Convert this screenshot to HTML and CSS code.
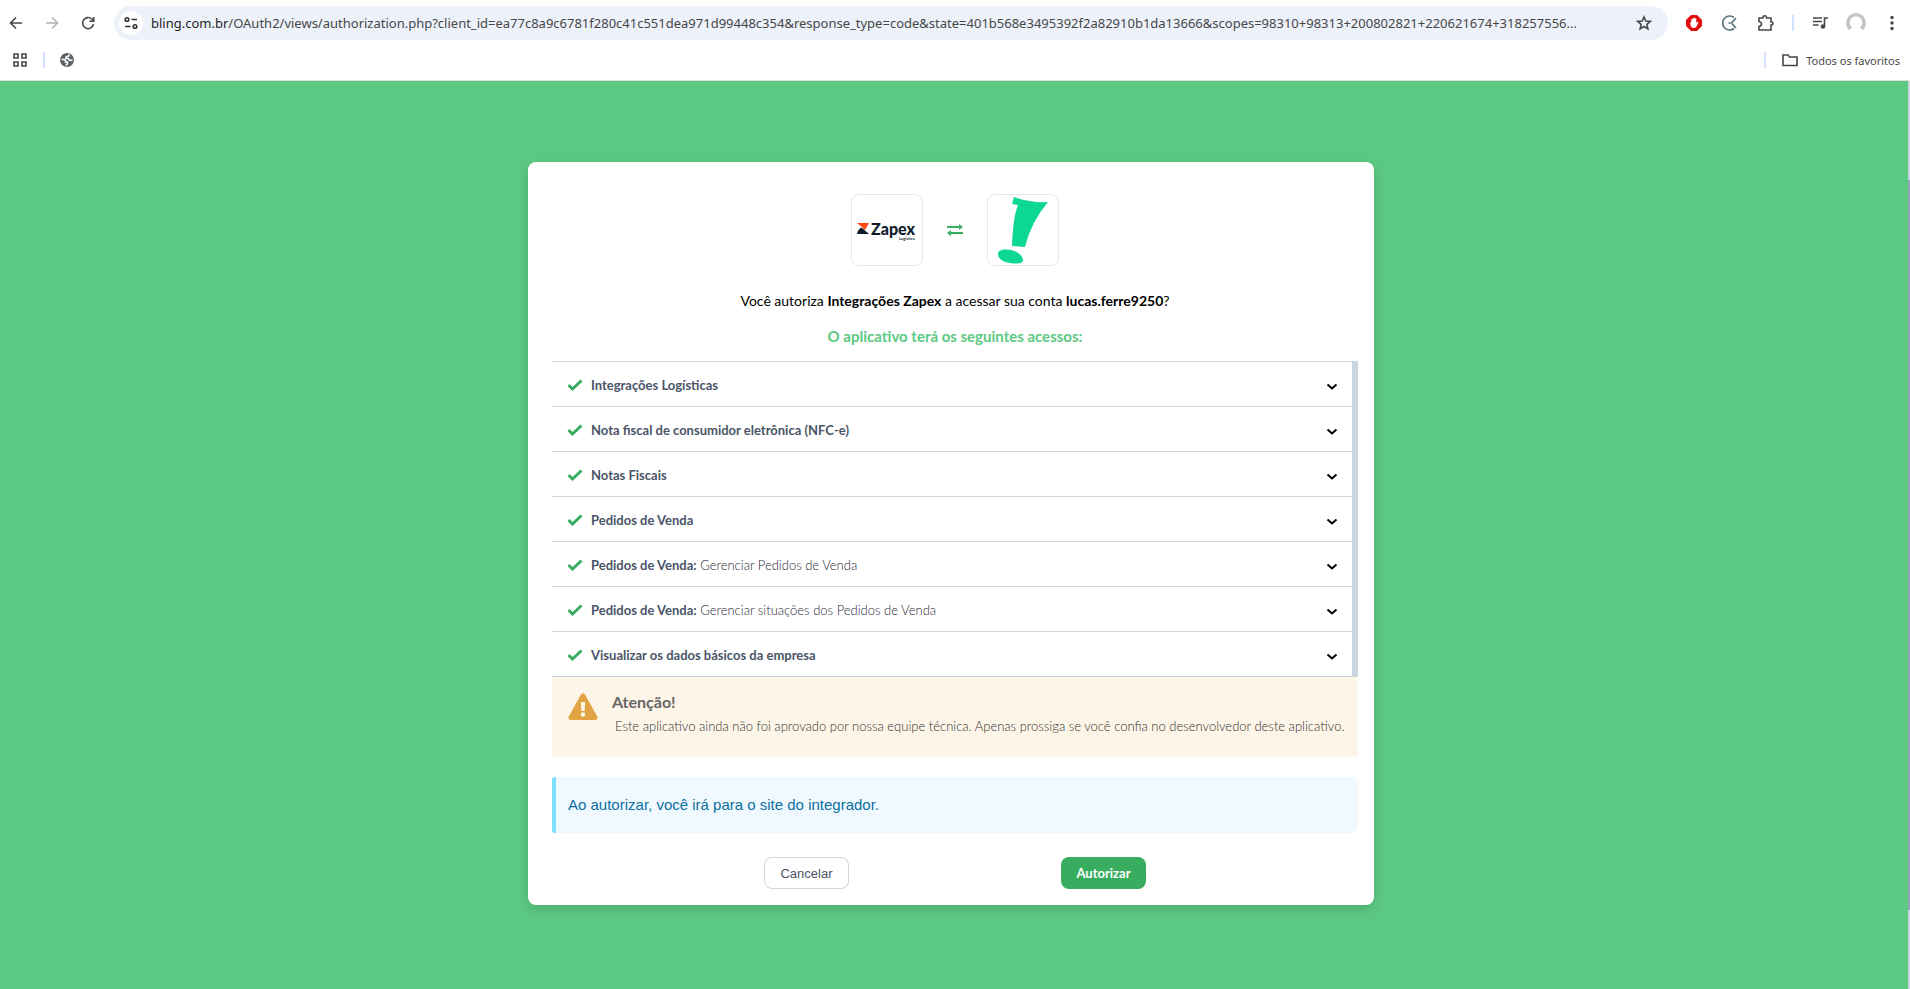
FILE: index.html
```
<!DOCTYPE html>
<html lang="pt-BR">
<head>
    <meta charset="utf-8">
    <title>Autorizar aplicativo</title>
    <link rel="stylesheet" href="styles.css">
</head>
<body>
    <header class="browser">
        <div class="toolbar">
            <div class="nav-buttons">
                <button class="icon-btn" aria-label="Voltar">
                    <svg width="14" height="14" viewBox="0 0 14 14"><path d="M13 7H2M7 1.5L1.5 7L7 12.5" /></svg>
                </button>
                <button class="icon-btn faded" aria-label="Avançar">
                    <svg width="14" height="14" viewBox="0 0 14 14"><path d="M1 7H12M7 1.5L12.5 7L7 12.5" /></svg>
                </button>
                <button class="icon-btn" aria-label="Recarregar">
                    <svg width="14" height="14" viewBox="0 0 14 14"><path d="M12.5 8A5.5 5.5 0 1 1 10.8 3L12.5 4.8M12.7 1V5.3H8.4" /></svg>
                </button>
            </div>
            <div class="address">
                <button class="site-info" aria-label="Informações do site">
                    <svg width="14" height="14" viewBox="0 0 14 14"><path d="M7.5 3.5H13M1 10.5H6.5" /><circle cx="3" cy="3.5" r="1.8" /><circle cx="11" cy="10.5" r="1.8" /></svg>
                </button>
                <span class="url"><span class="host">bling.com.br</span>/OAuth2/views/authorization.php?client_id=ea77c8a9c6781f280c41c551dea971d99448c354&amp;response_type=code&amp;state=401b568e3495392f2a82910b1da13666&amp;scopes=98310+98313+200802821+220621674+318257556...</span>
                <button class="icon-btn" aria-label="Favoritar">
                    <svg width="16" height="16" viewBox="0 0 16 16"><path d="M8 2L9.8 6.1L14.2 6.5L10.9 9.4L11.9 13.8L8 11.5L4.1 13.8L5.1 9.4L1.8 6.5L6.2 6.1Z" /></svg>
                </button>
            </div>
            <div class="extensions">
                <button class="icon-btn" aria-label="Bloqueador">
                    <svg width="16" height="16" viewBox="0 0 16 16"><path class="block-bg" d="M5 0H11L16 5V11L11 16H5L0 11V5Z" /><path class="block-hand" d="M4.2 7.5L5.2 7V4.2H6.5V3.2H7.8V2.8H9V3.5H10.3V8L11.6 6.8L12.4 7.6L10.8 11Q10 13 8 13Q5 13 4.5 10Z" /></svg>
                </button>
                <button class="icon-btn slate" aria-label="Extensão">
                    <svg width="16" height="16" viewBox="0 0 16 16"><path d="M12 2.5A7 7 0 1 0 12 13.5M14 3L9.5 8L14 13" /><circle class="dot" cx="7.5" cy="8" r="1" /></svg>
                </button>
                <button class="icon-btn" aria-label="Extensões">
                    <svg width="18" height="18" viewBox="0 0 18 18"><path d="M2 4H6V3.5A1.5 1.5 0 0 1 9.5 3.5V4H14V8H14.5A1.5 1.5 0 0 1 14.5 11H14V16H2V12.5Q4.5 12 4.5 10Q4.5 8 2 7.5Z" /></svg>
                </button>
                <span class="divider"></span>
                <button class="icon-btn" aria-label="Mídia">
                    <svg width="16" height="16" viewBox="0 0 16 16"><path d="M1 3H10M1 6.5H10M1 10H6.5M12.5 11V3H16" /><circle class="dot" cx="11" cy="11.5" r="2.3" /></svg>
                </button>
                <button class="icon-btn" aria-label="Perfil">
                    <svg width="20" height="20" viewBox="0 0 20 20"><circle class="avatar-bg" cx="10" cy="10" r="10" /><path class="avatar-fg" d="M10 3.5A6 6 0 0 1 13.5 14.5Q16.5 15.5 17 18V20H3V18Q3.5 15.5 6.5 14.5A6 6 0 0 1 10 3.5Z" /></svg>
                </button>
                <button class="icon-btn" aria-label="Menu">
                    <svg width="16" height="16" viewBox="0 0 16 16"><circle class="dot" cx="8" cy="2.5" r="1.7" /><circle class="dot" cx="8" cy="8" r="1.7" /><circle class="dot" cx="8" cy="13.5" r="1.7" /></svg>
                </button>
            </div>
        </div>
        <div class="bookmarks">
            <button class="icon-btn" aria-label="Aplicativos">
                <svg width="16" height="16" viewBox="0 0 16 16"><path d="M2 2H6V6H2ZM10 2H14V6H10ZM2 10H6V14H2ZM10 10H14V14H10Z" /></svg>
            </button>
            <span class="divider"></span>
            <button class="icon-btn" aria-label="Favorito">
                <svg width="14" height="14" viewBox="0 0 14 14"><circle class="globe" cx="7" cy="7" r="7" /><path class="land" d="M9 1.5Q9 3.5 7 3.5Q5.5 4 6 5.5H8.5Q9 7.5 11 7.5L12.5 7M1.5 6.5H4Q6 7 5.5 9H7.5V10.5L6 12.5" /></svg>
            </button>
            <div class="all-bookmarks">
                <span class="divider"></span>
                <button class="folder-btn">
                    <svg width="16" height="14" viewBox="0 0 16 14"><path d="M1 2H6L7.5 4H15V12.5H1Z" /></svg>
                    Todos os favoritos
                </button>
            </div>
        </div>
    </header>

    <div class="viewport">
        <main class="page">
            <section class="card">
                <div class="logos">
                    <div class="logo-box">
                        <svg width="64" height="24" viewBox="0 0 64 24" role="img" aria-label="Zapex Logística">
                            <path class="zapex-top" d="M2 5H14L10 12L7 9Z" />
                            <path class="zapex-bottom" d="M2 16Q3 11 6.5 9.5L14 16Z" />
                            <text class="zapex-name" x="16" y="17">Zapex</text>
                            <text class="zapex-sub" x="44" y="22">Logística</text>
                        </svg>
                    </div>
                    <svg class="swap" width="16" height="12" viewBox="0 0 16 12"><path class="swap-line" d="M0 3H13M16 9H3" /><path class="swap-head" d="M12 0L16 3L12 6ZM4 6L0 9L4 12Z" /></svg>
                    <div class="logo-box">
                        <svg width="70" height="70" viewBox="0 0 70 70" role="img" aria-label="Bling"><path class="bling" d="M26 2Q43 8 60 7Q43 27 37 52L24 51Q25 22 30 10L24 9ZM17 54.5C27 54 35 60 35 65C35 69 28 69 22 68C14 67 10 63 10 59C10 56 13 54.5 17 54.5Z" /></svg>
                    </div>
                </div>

                <p class="question">Você autoriza <strong>Integrações Zapex</strong> a acessar sua conta <strong>lucas.ferre9250</strong>?</p>
                <h1 class="subtitle">O aplicativo terá os seguintes acessos:</h1>

                <ul class="scopes">
                    <li><button class="scope"><svg class="check" width="16" height="12" viewBox="0 0 16 12"><path d="M1.5 6L5.5 10L14.5 1.5" /></svg><strong>Integrações Logísticas</strong><svg class="chevron" width="12" height="8" viewBox="0 0 12 8"><path d="M1.5 1.5L6 5.5L10.5 1.5" /></svg></button></li>
                    <li><button class="scope"><svg class="check" width="16" height="12" viewBox="0 0 16 12"><path d="M1.5 6L5.5 10L14.5 1.5" /></svg><strong>Nota fiscal de consumidor eletrônica (NFC-e)</strong><svg class="chevron" width="12" height="8" viewBox="0 0 12 8"><path d="M1.5 1.5L6 5.5L10.5 1.5" /></svg></button></li>
                    <li><button class="scope"><svg class="check" width="16" height="12" viewBox="0 0 16 12"><path d="M1.5 6L5.5 10L14.5 1.5" /></svg><strong>Notas Fiscais</strong><svg class="chevron" width="12" height="8" viewBox="0 0 12 8"><path d="M1.5 1.5L6 5.5L10.5 1.5" /></svg></button></li>
                    <li><button class="scope"><svg class="check" width="16" height="12" viewBox="0 0 16 12"><path d="M1.5 6L5.5 10L14.5 1.5" /></svg><strong>Pedidos de Venda</strong><svg class="chevron" width="12" height="8" viewBox="0 0 12 8"><path d="M1.5 1.5L6 5.5L10.5 1.5" /></svg></button></li>
                    <li><button class="scope"><svg class="check" width="16" height="12" viewBox="0 0 16 12"><path d="M1.5 6L5.5 10L14.5 1.5" /></svg><span><strong>Pedidos de Venda:</strong> Gerenciar Pedidos de Venda</span><svg class="chevron" width="12" height="8" viewBox="0 0 12 8"><path d="M1.5 1.5L6 5.5L10.5 1.5" /></svg></button></li>
                    <li><button class="scope"><svg class="check" width="16" height="12" viewBox="0 0 16 12"><path d="M1.5 6L5.5 10L14.5 1.5" /></svg><span><strong>Pedidos de Venda:</strong> Gerenciar situações dos Pedidos de Venda</span><svg class="chevron" width="12" height="8" viewBox="0 0 12 8"><path d="M1.5 1.5L6 5.5L10.5 1.5" /></svg></button></li>
                    <li><button class="scope"><svg class="check" width="16" height="12" viewBox="0 0 16 12"><path d="M1.5 6L5.5 10L14.5 1.5" /></svg><strong>Visualizar os dados básicos da empresa</strong><svg class="chevron" width="12" height="8" viewBox="0 0 12 8"><path d="M1.5 1.5L6 5.5L10.5 1.5" /></svg></button></li>
                </ul>

                <div class="warning">
                    <svg width="30" height="28" viewBox="0 0 30 28"><path class="triangle" d="M13 1.5Q15 -1 17 1.5L29.5 24Q30 27 27 27H3Q0 27 0.5 24Z" /><path class="mark" d="M12.8 9H17.2L16.7 18H13.3Z" /><circle class="mark" cx="15" cy="21.5" r="2.3" /></svg>
                    <div class="warning-text">
                        <h2>Atenção!</h2>
                        <p>Este aplicativo ainda não foi aprovado por nossa equipe técnica. Apenas prossiga se você confia no desenvolvedor deste aplicativo.</p>
                    </div>
                </div>

                <p class="info">Ao autorizar, você irá para o site do integrador.</p>

                <div class="actions">
                    <button class="btn btn-cancel">Cancelar</button>
                    <button class="btn btn-authorize">Autorizar</button>
                </div>
            </section>
        </main>
        <div class="scroll-track"><div class="scroll-thumb"></div></div>
    </div>
</body>
</html>
```
FILE: styles.css
```
* {
    box-sizing: border-box;
}
body {
    margin: 0;
    min-height: 100vh;
    display: flex;
    flex-direction: column;
    font-family: Lato, "Open Sans", sans-serif;
    background: #5cc983;
}
button {
    font-family: inherit;
    border: none;
    background: none;
    padding: 0;
    cursor: pointer;
}
h1, h2, p, ul {
    margin: 0;
    padding: 0;
}

/* browser bar */
.browser {
    height: 81px;
    padding: 6px 8px 0 8px;
    background: white;
    border-bottom: 1px solid #dadce0;
    font-family: "Noto Sans", "Open Sans", sans-serif;
    color: #474747;
}
.toolbar {
    display: flex;
    align-items: center;
    height: 34px;
}
.nav-buttons {
    display: flex;
    gap: 20px;
    width: 106px;
}
.icon-btn {
    display: flex;
    align-items: center;
    justify-content: center;
    color: #474747;
}
.icon-btn svg, .site-info svg, .folder-btn svg {
    fill: none;
    stroke: currentColor;
    stroke-width: 1.6;
}
.nav-buttons .icon-btn {
    width: 16px;
}
.extensions .icon-btn {
    width: 20px;
}
.icon-btn.faded {
    color: #b4b4b4;
}
.icon-btn.slate {
    color: #546e7a;
}
.icon-btn .dot {
    fill: currentColor;
    stroke: none;
}
.icon-btn .globe {
    fill: #5f6368;
    stroke: none;
}
.icon-btn .land {
    stroke: white;
}
.icon-btn .block-bg {
    fill: #e30b0b;
    stroke: none;
}
.icon-btn .block-hand {
    fill: white;
    stroke: none;
}
.icon-btn .avatar-bg {
    fill: #c4c4c4;
    stroke: none;
}
.icon-btn .avatar-fg {
    fill: white;
    stroke: none;
}
.address {
    flex: 1;
    min-width: 0;
    display: flex;
    align-items: center;
    height: 34px;
    padding: 0 16px 0 5px;
    border-radius: 17px;
    background: #edf1fa;
}
.site-info {
    display: flex;
    align-items: center;
    justify-content: center;
    width: 24px;
    height: 24px;
    border-radius: 12px;
    background: white;
    color: #303030;
}
.url {
    flex: 1;
    min-width: 0;
    overflow: hidden;
    white-space: nowrap;
    margin: 0 16px 0 8px;
    font-size: 13px;
}
.host {
    color: #1f1f1f;
}
.extensions {
    display: flex;
    align-items: center;
    gap: 16px;
    padding-left: 16px;
}
.divider {
    width: 2px;
    height: 16px;
    background: #d3e3fd;
}
.bookmarks {
    display: flex;
    align-items: center;
    gap: 15px;
    height: 40px;
    padding: 0 2px 0 4px;
}
.all-bookmarks {
    display: flex;
    align-items: center;
    gap: 16px;
    margin-left: auto;
}
.folder-btn {
    display: flex;
    align-items: center;
    gap: 8px;
    font-size: 11px;
    color: #474747;
}

/* page */
.viewport {
    flex: 1;
    display: flex;
}
.page {
    flex: 1;
    padding: 81px 6px 79px 0;
}
.scroll-track {
    width: 2px;
    padding: 99px 0 79px;
    background: #cbd5e0;
    display: flex;
}
.scroll-thumb {
    flex: 1;
    background: #94a3b8;
}
.card {
    max-width: 846px;
    margin: 0 auto;
    padding: 32px 16px 16px 24px;
    border-radius: 8px;
    background: white;
    box-shadow: 0 4px 12px rgba(0,0,0,0.15);
}
.logos {
    display: flex;
    align-items: center;
    justify-content: center;
    gap: 24px;
}
.logo-box {
    display: flex;
    align-items: center;
    justify-content: center;
    width: 72px;
    height: 72px;
    border: 1px solid #e2e8f0;
    border-radius: 8px;
}
.zapex-top {
    fill: #ff4713;
}
.zapex-bottom, .zapex-name, .zapex-sub {
    fill: #101c2b;
}
.zapex-name {
    font: 900 16px Lato, sans-serif;
}
.zapex-sub {
    font: bold 4px Lato, sans-serif;
}
.swap-line {
    stroke: #38ad60;
    stroke-width: 2;
}
.swap-head {
    fill: #38ad60;
}
.bling {
    fill: #0cd894;
}
.question {
    margin-top: 25px;
    font-size: 14px;
    line-height: 20px;
    text-align: center;
    color: #000;
}
.subtitle {
    margin: 15px 0 15px;
    font-size: 15px;
    line-height: 20px;
    text-align: center;
    color: #5cc983;
}
.scopes {
    list-style: none;
    border-top: 1px solid #cbd5e0;
    border-right: 6px solid #cbd5e0;
}
.scope {
    display: flex;
    align-items: center;
    gap: 8px;
    width: 100%;
    height: 45px;
    padding: 2px 14px 0 15px;
    border-bottom: 1px solid #cbd5e0;
    font-size: 13px;
    font-weight: 300;
    color: #1f2937;
}
.scope strong {
    font-weight: bold;
    color: #4a5568;
}
.check {
    fill: none;
    stroke: #38ad60;
    stroke-width: 3;
}
.chevron {
    margin: 4px 0 0 auto;
    fill: none;
    stroke: #000;
    stroke-width: 2;
}
.warning {
    display: flex;
    gap: 14px;
    padding: 16px 0 22px 16px;
    background: #fdf5e8;
    color: #666;
}
.triangle {
    fill: #e2a443;
}
.mark {
    fill: #fdf5e8;
}
.warning-text h2 {
    font-size: 16px;
    line-height: 18px;
}
.warning-text p {
    padding: 6px 0 0 3px;
    font-size: 13px;
    font-weight: 300;
    line-height: 18px;
    color: #333;
}
.info {
    margin-top: 20px;
    padding: 18px 12px;
    border-left: 4px solid #7fdfff;
    border-radius: 3px 8px 8px 3px;
    background: #f0f9ff;
    font-family: "Liberation Sans", sans-serif;
    font-size: 15px;
    line-height: 20px;
    color: #0c6f9e;
}
.actions {
    display: flex;
    justify-content: space-evenly;
    margin-top: 24px;
}
.btn {
    width: 85px;
    height: 32px;
    border-radius: 8px;
    font-size: 13px;
}
.btn-cancel {
    border: 1px solid #cbd5e0;
    background: white;
    font-family: "Liberation Sans", sans-serif;
    color: #4a5568;
}
.btn-authorize {
    background: #38ad60;
    font-weight: bold;
    color: white;
}
```
